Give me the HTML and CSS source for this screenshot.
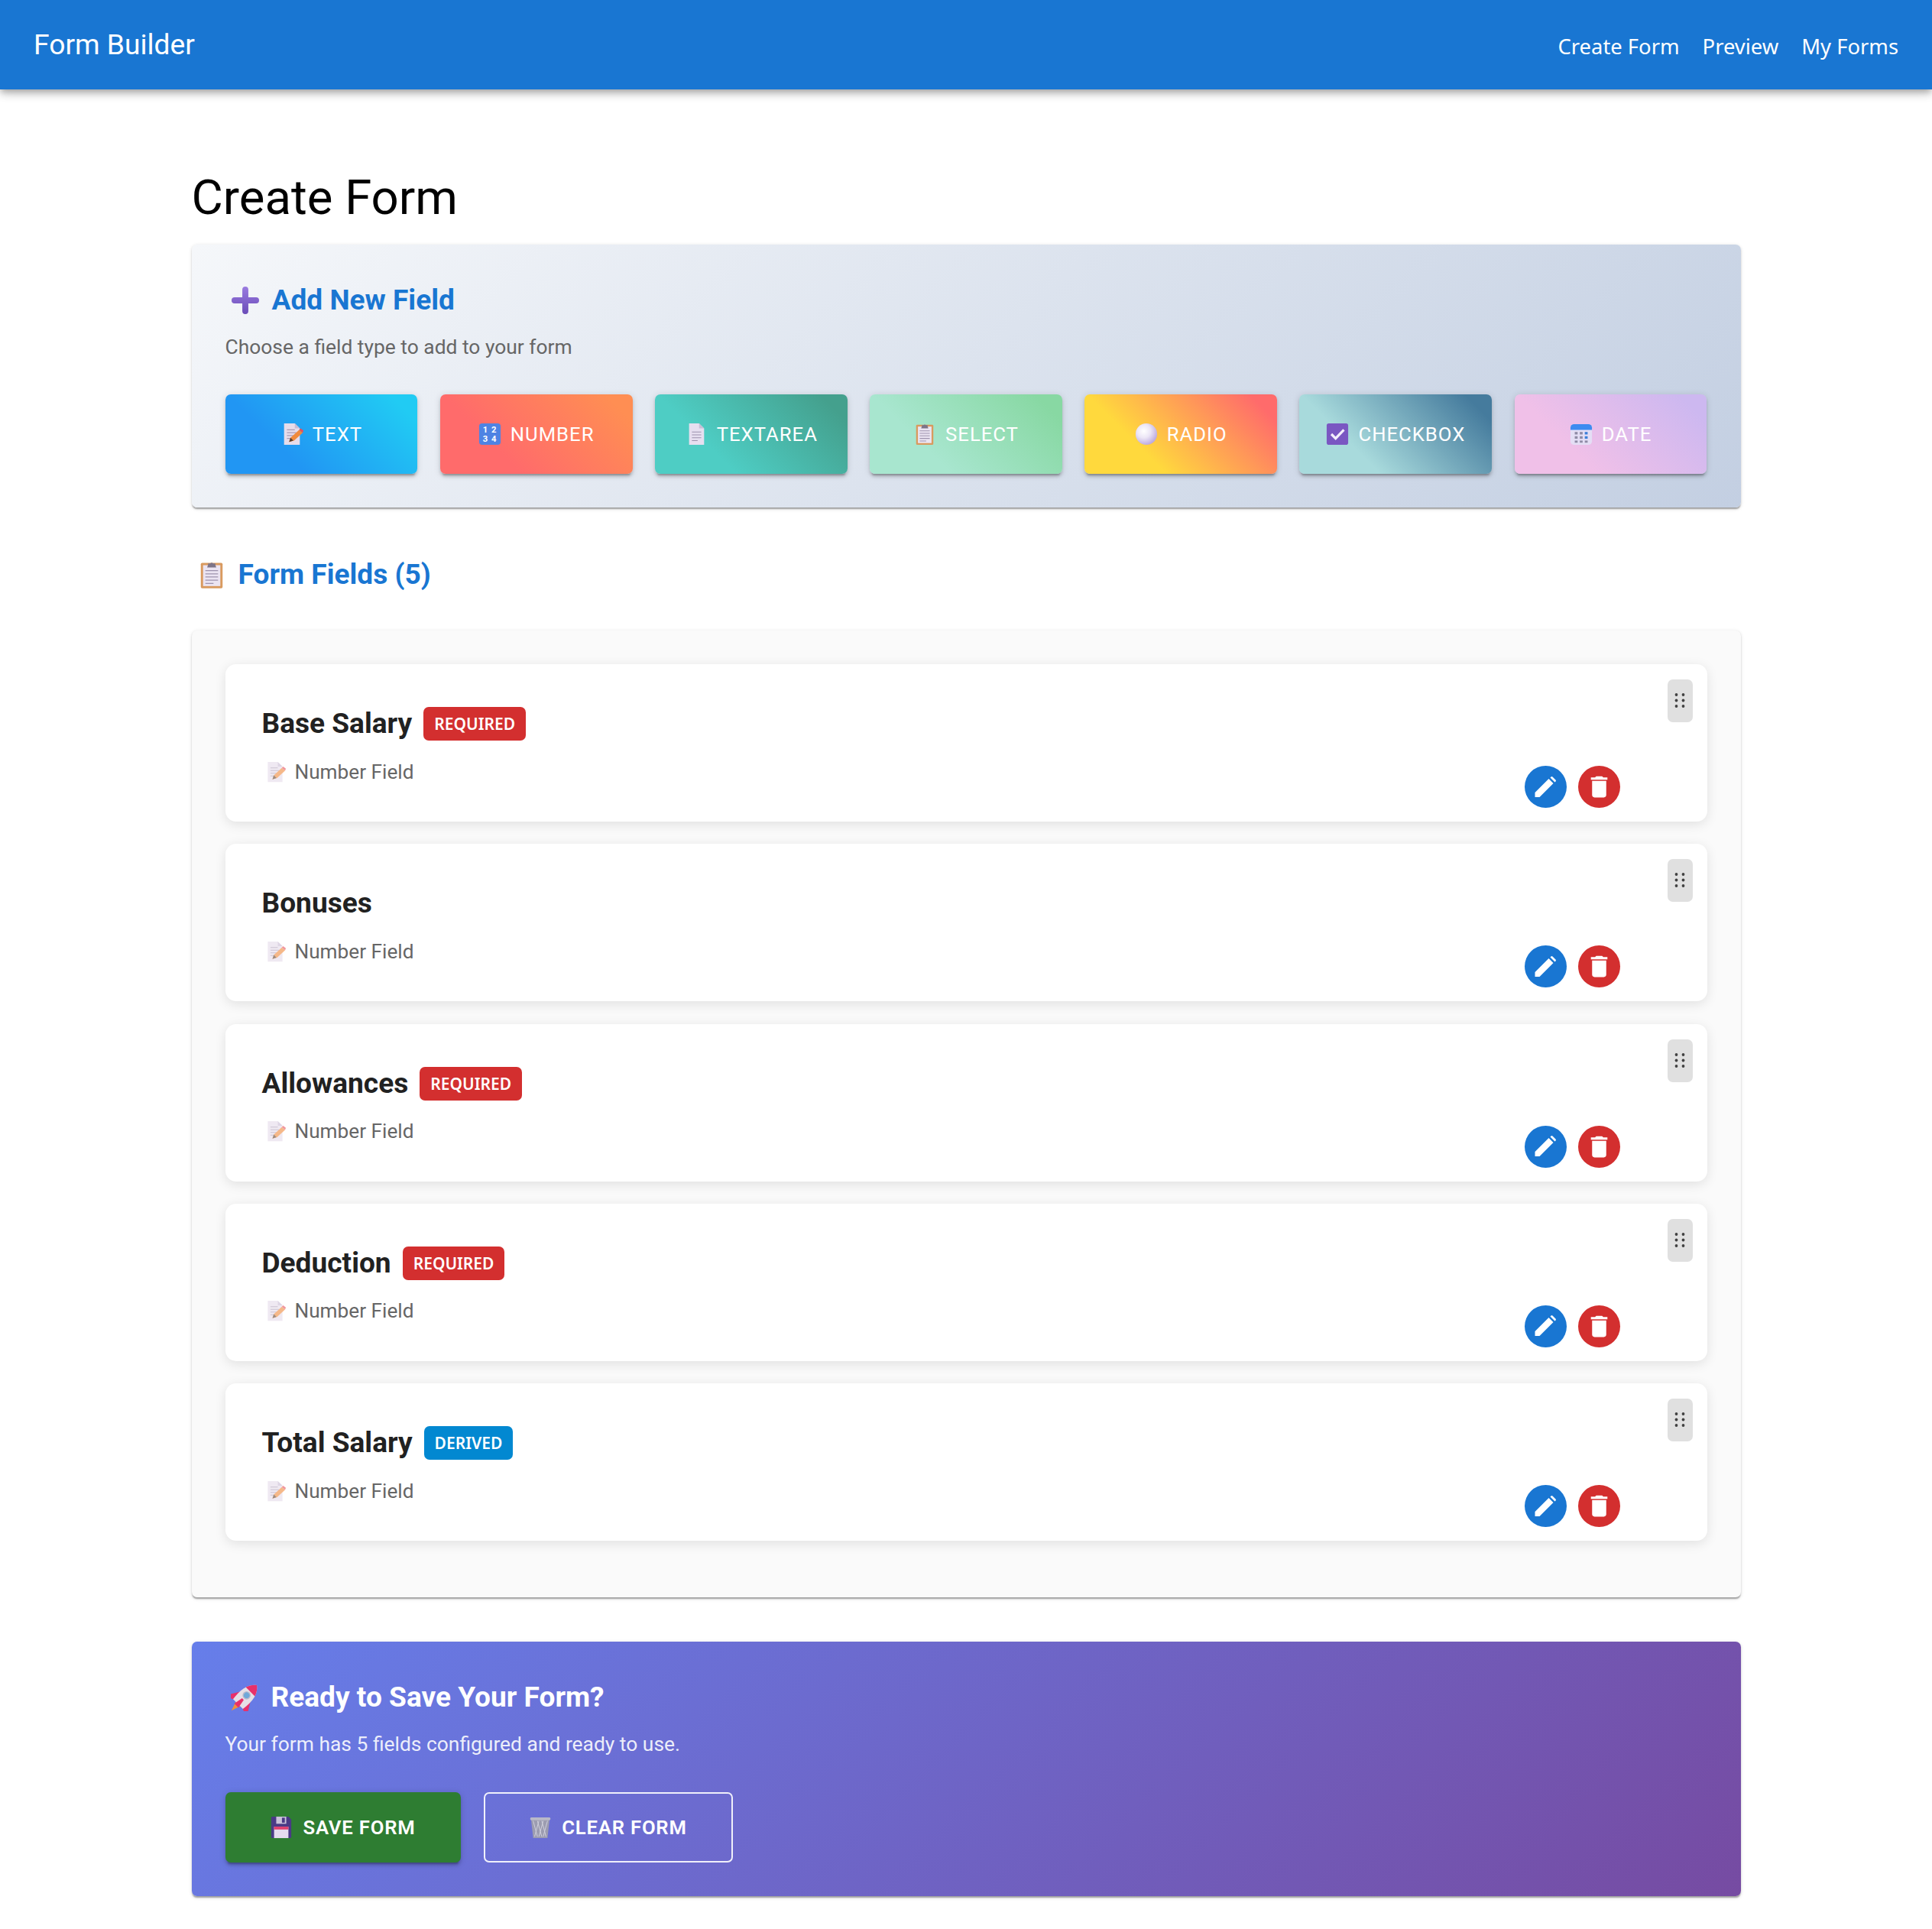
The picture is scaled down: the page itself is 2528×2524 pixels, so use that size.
FILE: index.html
```html
<!DOCTYPE html>
<html lang="en">
<head>
<meta charset="utf-8">
<title>Form Builder</title>
<link rel="stylesheet" href="styles.css">
</head>
<body>
<svg class="sprites" aria-hidden="true">
  <defs>
    <linearGradient id="plusGrad" x1="0" y1="0" x2="0" y2="1"><stop offset="0" stop-color="#9a7be0"/><stop offset="1" stop-color="#6a4cb8"/></linearGradient>
    <radialGradient id="balGrad" cx=".38" cy=".36" r=".7"><stop offset="0" stop-color="#ffffff"/><stop offset=".45" stop-color="#ece6f6"/><stop offset="1" stop-color="#b6a2dc"/></radialGradient>
  </defs>
  <symbol id="e-memo" viewBox="0 0 32 32">
    <path d="M5 1h15l7 7v23H5z" fill="#e6dcea"/><path d="M20 1l7 7h-7z" fill="#c9bcd4"/>
    <path d="M9 10h11M9 14h13M9 18h9M9 22h5" stroke="#a99bb5" stroke-width="1.2"/>
    <path d="M12 27l2-6L26 10l5 4-12 11z" fill="#f08a3c"/><path d="M26 10l2-2 4 3-1 3z" fill="#e8505b"/><path d="M12 27l2-6 4 4z" fill="#5a4030"/>
  </symbol>
  <symbol id="e-page" viewBox="0 0 32 32">
    <path d="M6 1h14l7 7v23H6z" fill="#e6dff0"/><path d="M20 1l7 7h-7z" fill="#c8bfd6"/>
    <path d="M10 13h13M10 17h13M10 21h13M10 25h8" stroke="#9d92ad" stroke-width="1.2"/>
  </symbol>
  <symbol id="e-clip" viewBox="0 0 32 32">
    <rect x="4" y="3" width="24" height="28" rx="1.5" fill="#d99a5f"/><rect x="6.5" y="5.5" width="19" height="23" fill="#ebe4f2"/>
    <path d="M12 5V3.500h2.500a1.800 1.800 0 0 1 3 0H20V5l1 3H11z" fill="#7d7488"/>
    <path d="M9 11.500h14M9 15h14M9 18.500h14M9 22h14M9 25.500h9" stroke="#9d92ad" stroke-width="1.100"/>
  </symbol>
  <symbol id="e-radio" viewBox="0 0 32 32"><circle cx="16" cy="16" r="15" fill="url(#balGrad)"/></symbol>
  <symbol id="e-check" viewBox="0 0 32 32">
    <rect x="1" y="1" width="30" height="30" rx="3" fill="#7a57c2"/>
    <path d="M7.500 16l6 6L25 10" fill="none" stroke="#f4eefc" stroke-width="3.400"/>
  </symbol>
  <symbol id="e-date" viewBox="0 0 32 32">
    <rect x="1" y="2" width="30" height="29" rx="5" fill="#e4def5"/><path d="M1 10V7a5 5 0 0 1 5-5h20a5 5 0 0 1 5 5v3z" fill="#3d8bf0"/>
    <g fill="#8f8ba6"><rect x="7" y="13" width="4" height="3.500"/><rect x="14" y="13" width="4" height="3.500"/><rect x="21" y="13" width="4" height="3.500" fill="#3d7fd8"/><rect x="7" y="19" width="4" height="3.500"/><rect x="14" y="19" width="4" height="3.500"/><rect x="21" y="19" width="4" height="3.500" fill="#3d7fd8"/><rect x="7" y="25" width="4" height="3"/><rect x="14" y="25" width="4" height="3"/><rect x="21" y="25" width="4" height="3"/></g>
  </symbol>
  <symbol id="e-plus" viewBox="0 0 32 32">
    <path d="M12.500 3.500a3.500 3.500 0 0 1 7 0v9h9a3.500 3.500 0 0 1 0 7h-9v9a3.500 3.500 0 0 1-7 0v-9h-9a3.500 3.500 0 0 1 0-7h9z" fill="url(#plusGrad)"/>
  </symbol>
  <symbol id="e-save" viewBox="0 0 32 32">
    <path d="M3 1h23l4 4v24a2 2 0 0 1-2 2H4a2 2 0 0 1-2-2V2z" fill="#4a3a86"/>
    <rect x="9" y="1" width="14" height="10" fill="#c9c2d9"/><rect x="17" y="2.500" width="4" height="7" fill="#4a3a86"/>
    <rect x="6" y="15" width="20" height="16" fill="#e6dcf0"/><rect x="6" y="15" width="20" height="4" fill="#e0406f"/>
  </symbol>
  <symbol id="e-bin" viewBox="0 0 32 32">
    <path d="M3 4h26l-3 27H6z" fill="#9c9cb0"/>
    <path d="M6 7l6 22M12 7l6 22M18 7l6 22M26 7l-6 22M20 7l-6 22M14 7L8 29" stroke="#d2d2de" stroke-width="1" fill="none"/>
    <rect x="2" y="2" width="28" height="4" rx="1.500" fill="#b9b9c8"/>
  </symbol>
  <symbol id="e-rocket" viewBox="0 0 32 32">
    <g transform="translate(16 16) rotate(45) scale(1.35) translate(-16 -16)">
      <path d="M13 23h6l-3 9z" fill="#f0913c"/>
      <path d="M10.500 14L5 23l1 3 6-3zM21.500 14L27 23l-1 3-6-3z" fill="#e8306a"/>
      <path d="M16 1c6 4.500 7.500 12 6 23H10C8.500 13 10 5.500 16 1z" fill="#e6dfe6"/>
      <path d="M16 1c2.700 2 4.500 4.600 5.500 8h-11c1-3.400 2.800-6 5.500-8z" fill="#e8306a"/>
      <circle cx="16" cy="13.500" r="3" fill="#6fa8d9" stroke="#b9b9cc" stroke-width="1"/>
      <path d="M15 18h2l1.500 8h-5z" fill="#e8306a"/>
    </g>
  </symbol>
  <symbol id="i-edit" viewBox="0 0 28 28">
    <path d="M.5 21.500L18.500 3.500 24.500 9.500 6.500 27.500H.5z" fill="#fff" transform="translate(0 -.5)"/>
    <path d="M20.500 1.500l1-1a1.500 1.500 0 0 1 2 0l4 4a1.500 1.500 0 0 1 0 2l-1 1z" fill="#fff"/>
  </symbol>
  <symbol id="i-del" viewBox="0 0 24 24">
    <path d="M6 19c0 1.100.9 2 2 2h8c1.100 0 2-.9 2-2V7H6v12zM19 4h-3.500l-1-1h-5l-1 1H5v2h14V4z" fill="#fff"/>
  </symbol>
  <symbol id="i-drag" viewBox="0 0 14 22">
    <circle cx="2.500" cy="3" r="1.900"/><circle cx="11.500" cy="3" r="1.900"/><circle cx="2.500" cy="10.500" r="1.900"/><circle cx="11.500" cy="10.500" r="1.900"/><circle cx="2.500" cy="18" r="1.900"/><circle cx="11.500" cy="18" r="1.900"/>
  </symbol>
</svg>

<header class="appbar">
  <div class="brand">Form Builder</div>
  <nav class="nav">
    <a class="nav-link">Create Form</a>
    <a class="nav-link">Preview</a>
    <a class="nav-link">My Forms</a>
  </nav>
</header>

<main class="page">
  <h1 class="page-title">Create Form</h1>

  <section class="add-panel">
    <h2 class="panel-heading heading-blue"><svg class="heading-emoji"><use href="#e-plus"/></svg>Add New Field</h2>
    <p class="panel-sub">Choose a field type to add to your form</p>
    <div class="type-row">
      <button class="type-btn g-text"><svg class="btn-emoji"><use href="#e-memo"/></svg>Text</button>
      <button class="type-btn g-number"><svg class="btn-emoji" viewBox="0 0 32 32"><rect x="1" y="1" width="30" height="30" rx="4" fill="#4f83e3"/><g class="num-glyph"><text x="10" y="14" text-anchor="middle">1</text><text x="22" y="14" text-anchor="middle">2</text><text x="10" y="27" text-anchor="middle">3</text><text x="22" y="27" text-anchor="middle">4</text></g></svg>Number</button>
      <button class="type-btn g-textarea"><svg class="btn-emoji"><use href="#e-page"/></svg>Textarea</button>
      <button class="type-btn g-select"><svg class="btn-emoji"><use href="#e-clip"/></svg>Select</button>
      <button class="type-btn g-radio"><svg class="btn-emoji"><use href="#e-radio"/></svg>Radio</button>
      <button class="type-btn g-checkbox"><svg class="btn-emoji"><use href="#e-check"/></svg>Checkbox</button>
      <button class="type-btn g-date"><svg class="btn-emoji"><use href="#e-date"/></svg>Date</button>
    </div>
  </section>

  <h2 class="fields-heading heading-blue"><svg class="heading-emoji"><use href="#e-clip"/></svg>Form Fields (5)</h2>

  <section class="fields-panel">
    <article class="field-card">
      <div class="field-body">
        <div class="field-title"><h3 class="field-name">Base Salary</h3><span class="badge badge-req">REQUIRED</span></div>
        <div class="field-type"><svg class="type-emoji"><use href="#e-memo"/></svg>Number Field</div>
      </div>
      <div class="field-actions"><button class="round-btn round-edit"><svg class="ico-edit"><use href="#i-edit"/></svg></button><button class="round-btn round-del"><svg class="ico-del"><use href="#i-del"/></svg></button></div>
      <div class="drag"><svg class="ico-drag"><use href="#i-drag"/></svg></div>
    </article>
    <article class="field-card">
      <div class="field-body">
        <div class="field-title"><h3 class="field-name">Bonuses</h3></div>
        <div class="field-type"><svg class="type-emoji"><use href="#e-memo"/></svg>Number Field</div>
      </div>
      <div class="field-actions"><button class="round-btn round-edit"><svg class="ico-edit"><use href="#i-edit"/></svg></button><button class="round-btn round-del"><svg class="ico-del"><use href="#i-del"/></svg></button></div>
      <div class="drag"><svg class="ico-drag"><use href="#i-drag"/></svg></div>
    </article>
    <article class="field-card">
      <div class="field-body">
        <div class="field-title"><h3 class="field-name">Allowances</h3><span class="badge badge-req">REQUIRED</span></div>
        <div class="field-type"><svg class="type-emoji"><use href="#e-memo"/></svg>Number Field</div>
      </div>
      <div class="field-actions"><button class="round-btn round-edit"><svg class="ico-edit"><use href="#i-edit"/></svg></button><button class="round-btn round-del"><svg class="ico-del"><use href="#i-del"/></svg></button></div>
      <div class="drag"><svg class="ico-drag"><use href="#i-drag"/></svg></div>
    </article>
    <article class="field-card">
      <div class="field-body">
        <div class="field-title"><h3 class="field-name">Deduction</h3><span class="badge badge-req">REQUIRED</span></div>
        <div class="field-type"><svg class="type-emoji"><use href="#e-memo"/></svg>Number Field</div>
      </div>
      <div class="field-actions"><button class="round-btn round-edit"><svg class="ico-edit"><use href="#i-edit"/></svg></button><button class="round-btn round-del"><svg class="ico-del"><use href="#i-del"/></svg></button></div>
      <div class="drag"><svg class="ico-drag"><use href="#i-drag"/></svg></div>
    </article>
    <article class="field-card">
      <div class="field-body">
        <div class="field-title"><h3 class="field-name">Total Salary</h3><span class="badge badge-der">DERIVED</span></div>
        <div class="field-type"><svg class="type-emoji"><use href="#e-memo"/></svg>Number Field</div>
      </div>
      <div class="field-actions"><button class="round-btn round-edit"><svg class="ico-edit"><use href="#i-edit"/></svg></button><button class="round-btn round-del"><svg class="ico-del"><use href="#i-del"/></svg></button></div>
      <div class="drag"><svg class="ico-drag"><use href="#i-drag"/></svg></div>
    </article>
  </section>

  <section class="save-panel">
    <h2 class="panel-heading"><svg class="heading-emoji"><use href="#e-rocket"/></svg>Ready to Save Your Form?</h2>
    <p class="panel-sub save-sub">Your form has 5 fields configured and ready to use.</p>
    <div class="save-row">
      <button class="save-btn save-primary"><svg class="btn-emoji"><use href="#e-save"/></svg>Save Form</button>
      <button class="save-btn save-outline"><svg class="btn-emoji"><use href="#e-bin"/></svg>Clear Form</button>
    </div>
  </section>
</main>
</body>
</html>
```

FILE: styles.css
```css
* { box-sizing: border-box; }
html, body { margin: 0; padding: 0; }
body { background: #fff; font-family: Roboto, "Liberation Sans", sans-serif; color: #000; }
.sprites { position: absolute; width: 0; height: 0; overflow: hidden; }
.num-glyph { font: 700 12px Roboto, sans-serif; fill: #fff; }

.appbar {
  height: 117px; display: flex; align-items: center; justify-content: space-between;
  padding: 0 44px; background: #1976d2; color: #fff;
  box-shadow: 0 3.700px 7.300px -1.800px rgba(0,0,0,.2), 0 7.300px 9.200px 0 rgba(0,0,0,.14), 0 1.800px 18.300px 0 rgba(0,0,0,.12);
  position: relative;
}
.brand { font-size: 37.200px; font-weight: 400; line-height: 1; margin-top: 1px; }
.nav { display: flex; gap: 30px; margin-top: 4px; }
.nav-link { font-family: "Noto Sans", "Open Sans", sans-serif; font-size: 27.400px; line-height: 1.3; color: #fff; }

.page { width: 2027px; margin: 0 auto; padding: 103px 0 43px; }
.page-title { margin: 0 0 23px; font-size: 63.500px; font-weight: 400; line-height: 77px; }

.panel-heading { display: flex; align-items: center; margin: 0; font-size: 37.100px; font-weight: 700; line-height: 44px; }
.heading-blue { color: #1976d2; }
.heading-emoji { width: 36px; height: 36px; margin-right: 17px; flex: none; }
.panel-sub { margin: 17px 0 0; font-size: 26.400px; line-height: 44px; color: #666; }

.add-panel {
  padding: 51px 44px 44px; border-radius: 7px;
  background: linear-gradient(135deg, #f5f7fa 0%, #c3cfe2 100%);
  box-shadow: 0 3.700px 1.800px -1.800px rgba(0,0,0,.2), 0 1.800px 1.800px 0 rgba(0,0,0,.14), 0 1.800px 5.500px 0 rgba(0,0,0,.12);
}
.add-panel .panel-heading { padding-left: 8px; }
.type-row { display: grid; grid-template-columns: repeat(7, 1fr); gap: 29.330px; margin-top: 40px; }
.type-btn {
  height: 104px; display: flex; align-items: center; justify-content: center; gap: 12px;
  border: 0; border-radius: 7px; color: #fff; font: 400 25.670px Roboto, sans-serif;
  letter-spacing: 1px; text-transform: uppercase;
  box-shadow: 0 5.500px 1.800px -3.700px rgba(0,0,0,.2), 0 3.700px 3.700px 0 rgba(0,0,0,.14), 0 1.800px 9.200px 0 rgba(0,0,0,.12);
}
.btn-emoji { width: 30px; height: 30px; flex: none; }
.g-text { background: linear-gradient(45deg, #2196f3 30%, #21cbf3 90%); }
.g-number { background: linear-gradient(45deg, #ff6b6b 30%, #ff8e53 90%); }
.g-textarea { background: linear-gradient(45deg, #4ecdc4 30%, #44a08d 90%); }
.g-select { background: linear-gradient(45deg, #a8e6cf 30%, #88d8a3 90%); }
.g-radio { background: linear-gradient(45deg, #ffd93d 30%, #ff6b6b 90%); }
.g-checkbox { background: linear-gradient(45deg, #a8dadc 30%, #457b9d 90%); }
.g-date { background: linear-gradient(45deg, #f0c0e8 30%, #cdb8f0 90%); }

.fields-heading { display: flex; align-items: center; margin: 66px 0 51px; padding-left: 7px; font-size: 37.100px; font-weight: 700; line-height: 44px; }
.fields-heading .heading-emoji { width: 38px; height: 38px; margin-right: 16px; }

.fields-panel {
  padding: 44px 44px 74px; background: #fafafa; border-radius: 7px;
  display: flex; flex-direction: column; gap: 29.330px;
  box-shadow: 0 3.700px 1.800px -1.800px rgba(0,0,0,.2), 0 1.800px 1.800px 0 rgba(0,0,0,.14), 0 1.800px 5.500px 0 rgba(0,0,0,.12);
}
.field-card {
  position: relative; height: 206px; display: flex; justify-content: space-between;
  padding: 0 114px 18px 48px; background: #fff; border-radius: 14px;
  box-shadow: 0 3.700px 14.700px rgba(0,0,0,.1);
}
.field-body { padding-top: 55px; }
.field-title { display: flex; align-items: center; gap: 15px; height: 46px; }
.field-name { margin: 0; font-size: 37.100px; font-weight: 700; line-height: 46px; color: #212121; }
.badge {
  height: 44px; display: flex; align-items: center; padding: 0 14px; border-radius: 7px;
  font: 600 21px "Noto Sans", "Open Sans", sans-serif; color: #fff;
}
.badge-req { background: #d32f2f; }
.badge-der { background: #0288d1; }
.field-type { display: flex; align-items: center; margin-top: 25.500px; padding-left: 3px; font-size: 26.200px; line-height: 28px; color: #666; }
.type-emoji { width: 28px; height: 28px; margin-right: 12px; opacity: .6; flex: none; }
.field-actions { align-self: flex-end; display: flex; gap: 14.700px; }
.round-btn { width: 55px; height: 55px; padding: 0; border: 0; border-radius: 50%; display: flex; align-items: center; justify-content: center; }
.round-edit { background: #1976d2; }
.round-del { background: #d32f2f; }
.ico-edit { width: 28px; height: 28px; }
.ico-del { width: 37px; height: 37px; }
.drag {
  position: absolute; top: 20px; right: 19px; width: 33px; height: 56px; border-radius: 7px;
  background: #e0e0e0; display: flex; align-items: center; justify-content: center;
}
.ico-drag { width: 14px; height: 22px; fill: #424242; }

.save-panel {
  margin-top: 58px; padding: 51px 44px 44px; border-radius: 7px; color: #fff;
  background: linear-gradient(135deg, #667eea 0%, #764ba2 100%);
  box-shadow: 0 3.700px 1.800px -1.800px rgba(0,0,0,.2), 0 1.800px 1.800px 0 rgba(0,0,0,.14), 0 1.800px 5.500px 0 rgba(0,0,0,.12);
}
.save-panel .panel-heading { padding-left: 7px; }
.save-sub { color: rgba(255,255,255,.9); }
.save-row { display: flex; gap: 30px; margin-top: 41px; }
.save-btn {
  height: 92px; display: flex; align-items: center; justify-content: center; gap: 13px;
  border-radius: 7px; color: #fff; font: 600 25.670px Roboto, sans-serif; letter-spacing: .8px; text-transform: uppercase;
}
.save-primary { width: 308px; border: 0; background: #2e7d32; box-shadow: 0 5.500px 1.800px -3.700px rgba(0,0,0,.2), 0 3.700px 3.700px 0 rgba(0,0,0,.14), 0 1.800px 9.200px 0 rgba(0,0,0,.12); }
.save-outline { width: 326px; border: 2px solid rgba(255,255,255,.9); background: transparent; }
```
